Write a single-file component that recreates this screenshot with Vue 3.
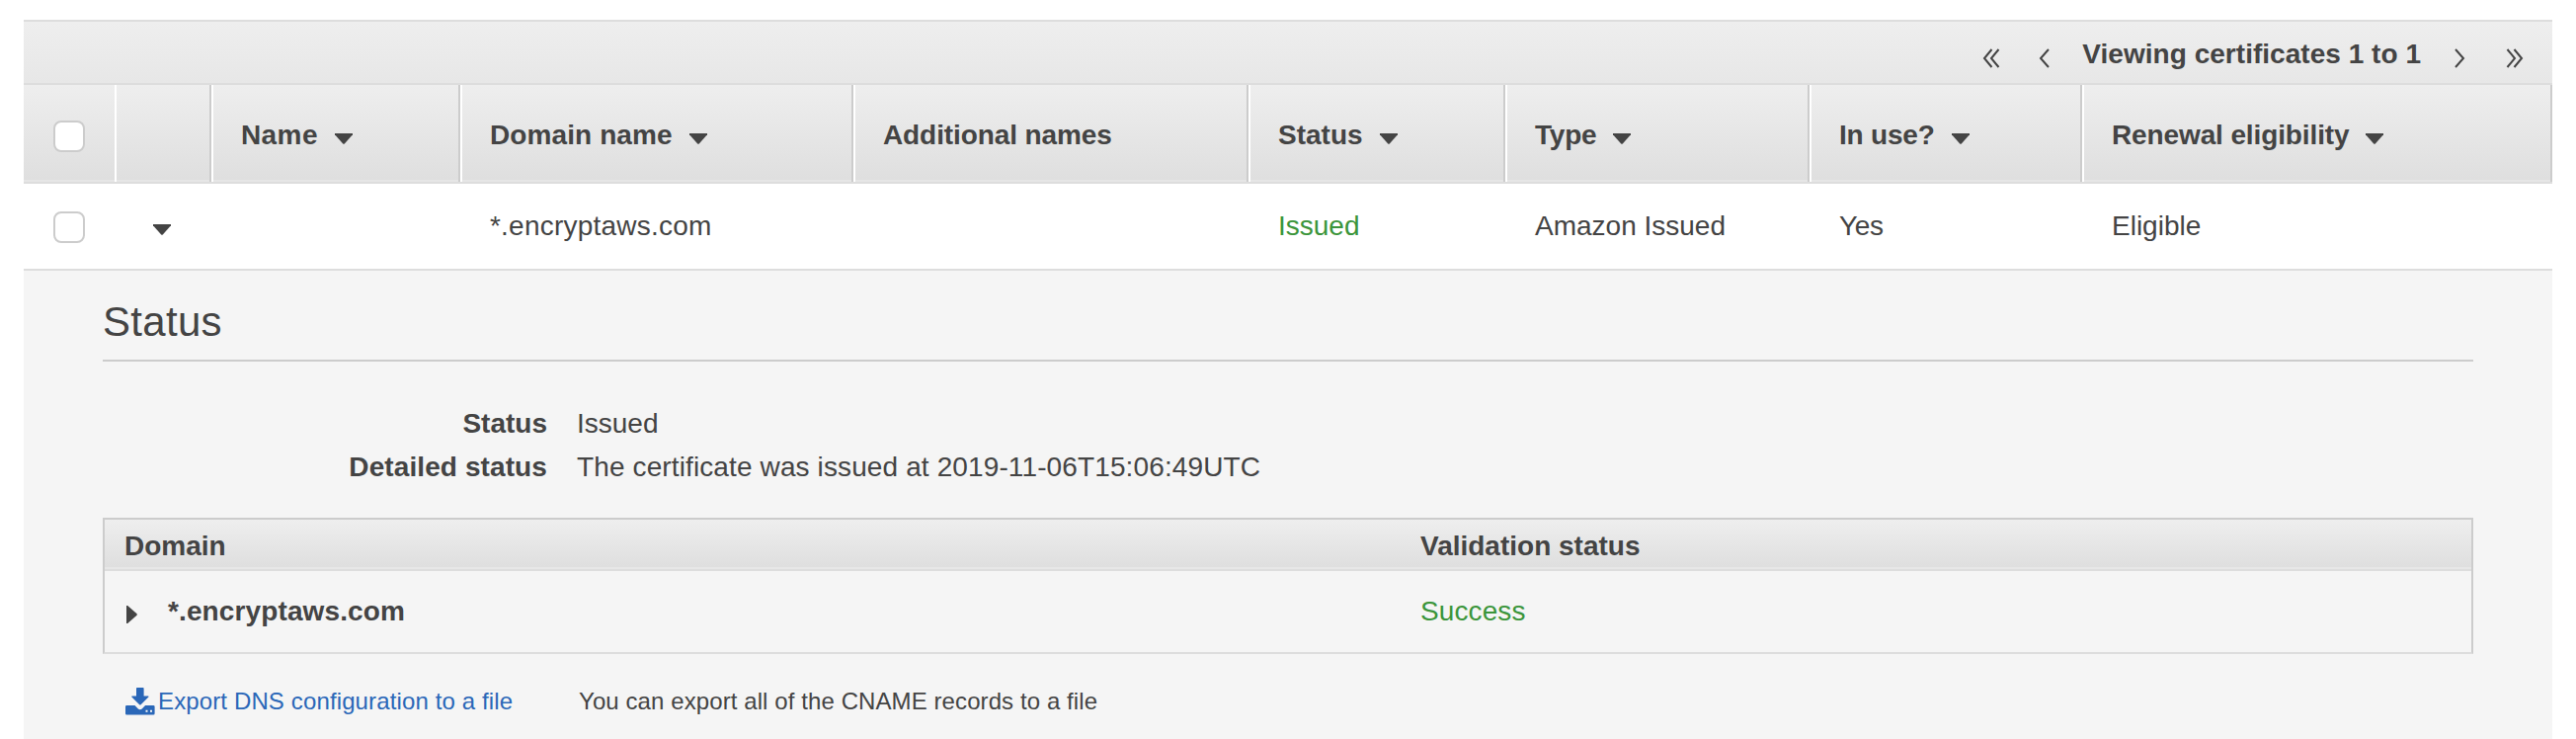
<script setup>
const columns = [
  { label: 'Name', sort: true, cls: 'c-name' },
  { label: 'Domain name', sort: true, cls: 'c-domain' },
  { label: 'Additional names', sort: false, cls: 'c-additional' },
  { label: 'Status', sort: true, cls: 'c-status' },
  { label: 'Type', sort: true, cls: 'c-type' },
  { label: 'In use?', sort: true, cls: 'c-use' },
  { label: 'Renewal eligibility', sort: true, cls: 'c-renewal' },
]
const values = ['', '*.encryptaws.com', '', 'Issued', 'Amazon Issued', 'Yes', 'Eligible']
</script>

<template>
  <div class="page">
    <div class="panel">
      <div class="pager">
        <svg class="arrow first" width="18" height="20" viewBox="0 0 18 20"><path d="M9.500 1 2 10l7.500 9M16.500 1 9 10l7.500 9" /></svg>
        <svg class="arrow prev" width="12" height="20" viewBox="0 0 12 20"><path d="M10 1 2 10l8 9" /></svg>
        <span class="viewing">Viewing certificates 1 to 1</span>
        <svg class="arrow next" width="12" height="20" viewBox="0 0 12 20"><path d="M2 1l8 9-8 9" /></svg>
        <svg class="arrow last" width="18" height="20" viewBox="0 0 18 20"><path d="M1.500 1 9 10l-7.500 9M8.500 1 16 10l-7.500 9" /></svg>
      </div>

      <div class="cols head">
        <div class="hcell plain"><span class="box"></span></div>
        <div class="hcell"></div>
        <div v-for="c in columns" :key="c.label" class="hcell" :class="c.cls">
          <span>{{ c.label }}</span>
          <svg v-if="c.sort" class="caret" width="18" height="11" viewBox="0 0 18 11"><path d="M0 0h18v1.200L10 10.300q-1 1-2 0L0 1.200z" /></svg>
        </div>
      </div>

      <div class="cols row">
        <div class="cell mark"><span class="box"></span></div>
        <div class="cell toggle">
          <svg width="18" height="11" viewBox="0 0 18 11"><path d="M0 0h18v1.200L10 10.300q-1 1-2 0L0 1.200z" /></svg>
        </div>
        <div v-for="(v, i) in values" :key="i" class="cell" :class="['v' + i, { ok: i === 3 }]"><span>{{ v }}</span></div>
      </div>

      <div class="detail">
        <h2>Status</h2>
        <dl>
          <dt>Status</dt>
          <dd>Issued</dd>
          <dt class="wide">Detailed status</dt>
          <dd class="long">The certificate was issued at 2019-11-06T15:06:49UTC</dd>
        </dl>

        <div class="inner">
          <div class="ihead">
            <div>Domain</div>
            <div>Validation status</div>
          </div>
          <div class="irow">
            <div class="dom">
              <svg width="11" height="18" viewBox="0 0 11 18"><path d="M0 0h1.200L10.300 8q1 1 0 2L1.200 18H0z" /></svg>
              <b>*.encryptaws.com</b>
            </div>
            <div class="ok success">Success</div>
          </div>
        </div>

        <div class="export">
          <a>
            <svg width="30" height="28" viewBox="0 0 30 28">
              <path d="M11.800 0h6q.8 0 .8.800v7.700h4.500q.8.300.300 1l-7.800 7.800q-.7.600-1.400 0L6.400 9.500q-.5-.7.300-1H11V.8q0-.8.800-.8z" />
              <path fill-rule="evenodd" d="M1.300 18h8.200l3.400 3.400q1.900 1.600 3.800 0L20.100 18h8.200q1.300 0 1.300 1.300v6.900q0 1.300-1.300 1.300h-27Q0 27.500 0 26.200v-6.900Q0 18 1.300 18zM20.500 22.700v2h2v-2zM25 22.700v2h2v-2z" />
            </svg>
            <span>Export DNS configuration to a file</span>
          </a>
          <p>You can export all of the CNAME records to a file</p>
        </div>
      </div>
    </div>
  </div>
</template>

<style>
body { background: #fff; }
</style>

<style scoped>
.page {
  width: 2608px;
  height: 748px;
  padding: 20px 24px 0;
  box-sizing: border-box;
  overflow: hidden;
  background: #fff;
  color: #444;
  font: 28px/44px "Liberation Sans", Arial, sans-serif;
}
.page * { box-sizing: border-box; }
.pager {
  height: 66px;
  border-top: 2px solid #ddd;
  border-bottom: 2px solid #ddd;
  background: linear-gradient(#eee, #e7e7e7);
  display: flex;
  align-items: flex-start;
  justify-content: flex-end;
  padding-right: 29px;
}
.arrow {
  margin-top: 27px;
  fill: none;
  stroke: #444;
  stroke-width: 2;
}
.prev { margin-left: 39px; }
.next { margin-left: 33px; }
.last { margin-left: 41px; }
.viewing {
  font-weight: 700;
  letter-spacing: 0.03px;
  margin: 11px 0 0 32px;
}
.cols {
  display: grid;
  grid-template-columns: 92px 98px 252px 398px 400px 260px 308px 276px 476px;
}
.head {
  height: 100px;
  border-bottom: 2px solid #ddd;
  font-weight: 700;
}
.hcell {
  display: flex;
  align-items: center;
  padding: 4px 0 0 28px;
  border-left: 2px solid #fff;
  border-right: 2px solid #ccc;
  background: linear-gradient(#eee, #dfdfdf 95px, #dfdfdf 96px, #e6e6e6 96px);
}
.hcell:nth-child(1) {
  padding: 6px 0 0 30px;
  border: 0;
}
.c-name { letter-spacing: 0.4px; }
.c-domain { letter-spacing: 0.1px; }
.c-additional { letter-spacing: -0.1px; }
.c-type { letter-spacing: -0.2px; }
.c-use { letter-spacing: -0.2px; }
.c-renewal { letter-spacing: -0.12px; }
.caret {
  flex: none;
  margin: 6px 0 0 17px;
  fill: #444;
}
.box {
  width: 32px;
  height: 32px;
  border: 2px solid #ccc;
  border-radius: 8px;
  background: #fff;
}
.row {
  height: 88px;
  border-bottom: 2px solid #ddd;
  background: #fff;
}
.cell {
  display: flex;
  align-items: center;
  padding: 0 0 0 30px;
}
.v1 { letter-spacing: 0.22px; }
.v5 { letter-spacing: -0.3px; }
.mark { padding-top: 2px; }
.toggle {
  padding: 7px 0 0 39px;
  fill: #444;
}
.ok { color: #3b953b; }
.detail {
  height: 474px;
  background: #f5f5f5;
  padding: 26px 80px 0;
}
h2 {
  margin: 0;
  height: 66px;
  border-bottom: 2px solid #ccc;
  font-size: 42px;
  line-height: 52px;
  font-weight: 400;
  letter-spacing: 0.3px;
}
dl {
  margin: 41px 0 29px;
  display: grid;
  grid-template-columns: 450px 1fr;
  column-gap: 30px;
}
dt {
  font-weight: 700;
  text-align: right;
}
.wide { letter-spacing: 0.1px; }
dd { margin: 0; }
.long { letter-spacing: 0.12px; }
.inner {
  height: 138px;
  border: 2px solid #ccc;
  border-bottom-color: #ddd;
}
.ihead, .irow {
  display: grid;
  grid-template-columns: 1312px 1fr;
  padding-left: 20px;
}
.ihead {
  height: 52px;
  border-bottom: 2px solid #ddd;
  background: linear-gradient(#eee, #dfdfdf 47px, #dfdfdf 48px, #e7e7e7 48px);
  font-weight: 700;
  padding-top: 5px;
}
.irow { padding-top: 19px; }
.dom { display: flex; }
.dom b { letter-spacing: 0.12px; }
.success { letter-spacing: 0.1px; }
.dom svg {
  fill: #444;
  margin: 16px 31px 0 2px;
}
.export {
  display: flex;
  padding: 26px 0 0 23px;
  font-size: 24px;
}
.export a {
  display: flex;
  width: 459px;
  color: #2a67b8;
  letter-spacing: 0.13px;
}
.export svg {
  fill: #2a67b8;
  margin: 8px 3px 0 0;
}
.export p {
  margin: 0;
  letter-spacing: 0.09px;
}
</style>
